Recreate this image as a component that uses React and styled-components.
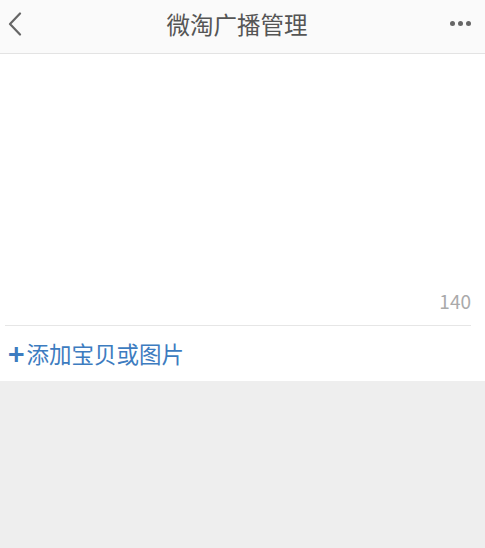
import styled, { createGlobalStyle } from 'styled-components';

const GlobalStyle = createGlobalStyle`
  html, body {
    margin: 0;
    padding: 0;
    background: #eeeeee;
    font-family: "Noto Sans CJK SC", "Noto Sans", sans-serif;
  }
`;

export default function App() {
    return (
        <Page>
            <GlobalStyle />
            <Header>
                <IconButton aria-label="back">
                    <svg width="16" height="24" viewBox="0 0 16 24">
                        <path d="M13 1.5 L3 12 L13 22.5" fill="none" stroke="#666" strokeWidth="2.2" strokeLinecap="round" strokeLinejoin="round" />
                    </svg>
                </IconButton>
                <Title>微淘广播管理</Title>
                <IconButton aria-label="more">
                    <Dots>
                        <Dot />
                        <Dot />
                        <Dot />
                    </Dots>
                </IconButton>
            </Header>
            <Editor>
                <TextArea />
                <Counter>140</Counter>
            </Editor>
            <AddRow>
                <Plus>+</Plus>添加宝贝或图片
            </AddRow>
        </Page>
    );
}

/* --- STYLES --- */
const Page = styled.div`
    width: 100%;
    min-height: 548px;
    background: #eeeeee;
`;

const Header = styled.div`
    height: 54px;
    display: flex;
    align-items: center;
    justify-content: space-between;
    padding: 0 12px 0 3px;
    background: #fafafa;
    border-bottom: 1px solid #e3e3e3;
    box-sizing: border-box;
`;

const IconButton = styled.div`
    width: 24px;
    height: 30px;
    display: flex;
    align-items: center;
    justify-content: center;
    margin-top: -6px;
`;

const Title = styled.div`
    font-size: 23.5px;
    color: #555;
    margin-top: -6px;
    margin-right: 2px;
`;

const Dots = styled.div`
    display: flex;
    gap: 3px;
    margin-right: 2px;
`;

const Dot = styled.span`
    width: 5px;
    height: 5px;
    border-radius: 50%;
    background: #666;
`;

const Editor = styled.div`
    background: #fff;
    padding: 0 14px 0 5px;
    height: 272px;
    display: flex;
    flex-direction: column;
    justify-content: flex-end;
`;

const TextArea = styled.div`
    flex: 1;
`;

const Counter = styled.div`
    text-align: right;
    font-size: 19px;
    color: #aaa;
    padding-bottom: 12px;
    border-bottom: 1px solid #e6e6e6;
    line-height: 24px;
`;

const AddRow = styled.div`
    background: #fff;
    height: 55px;
    padding: 0 8px;
    display: flex;
    align-items: center;
    font-size: 22.5px;
    color: #3d7cc0;
    box-sizing: border-box;
    padding-bottom: 2px;
`;

const Plus = styled.span`
    font-size: 28px;
    font-weight: bold;
    margin-right: 2px;
    line-height: 1;
`;
